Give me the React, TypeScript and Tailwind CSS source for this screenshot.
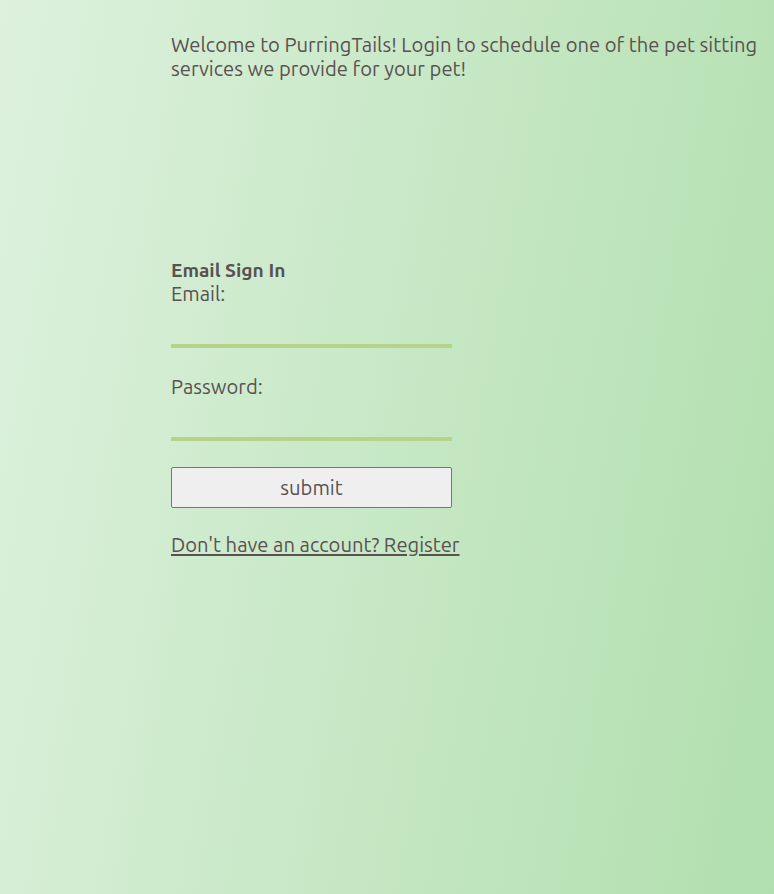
export default function App() {
  return (
    <div className="min-h-[894px] w-full bg-[linear-gradient(100deg,#ddf1dd_0%,#b1dfae_100%)] font-['Ubuntu','Open_Sans',sans-serif] text-[20.2px] leading-[24px] text-[#5a5151]">
      <div className="pl-[171px] pr-[8px] pt-[33px]">
        <p>
          Welcome to PurringTails! Login to schedule one of the pet sitting services we provide for your pet!
        </p>

        <form className="mt-[177px] flex w-[281px] flex-col" onSubmit={(e) => e.preventDefault()}>
          <h2 className="text-[19.2px] font-bold">Email Sign In</h2>
          <label>Email:</label>
          <input type="email" className="h-[42px] border-b-4 border-[#b5d48a] bg-transparent outline-none" />

          <label className="mt-[27px]">Password:</label>
          <input type="password" className="h-[42px] border-b-4 border-[#b5d48a] bg-transparent outline-none" />

          <button
            type="submit"
            className="mt-[26px] h-[41px] rounded-[2px] border border-[#767676] bg-[#efefef] text-[#5a5151]"
          >
            submit
          </button>

          <a href="#" className="mt-[25px] whitespace-nowrap underline">
            Don't have an account? Register
          </a>
        </form>
      </div>
    </div>
  );
}
